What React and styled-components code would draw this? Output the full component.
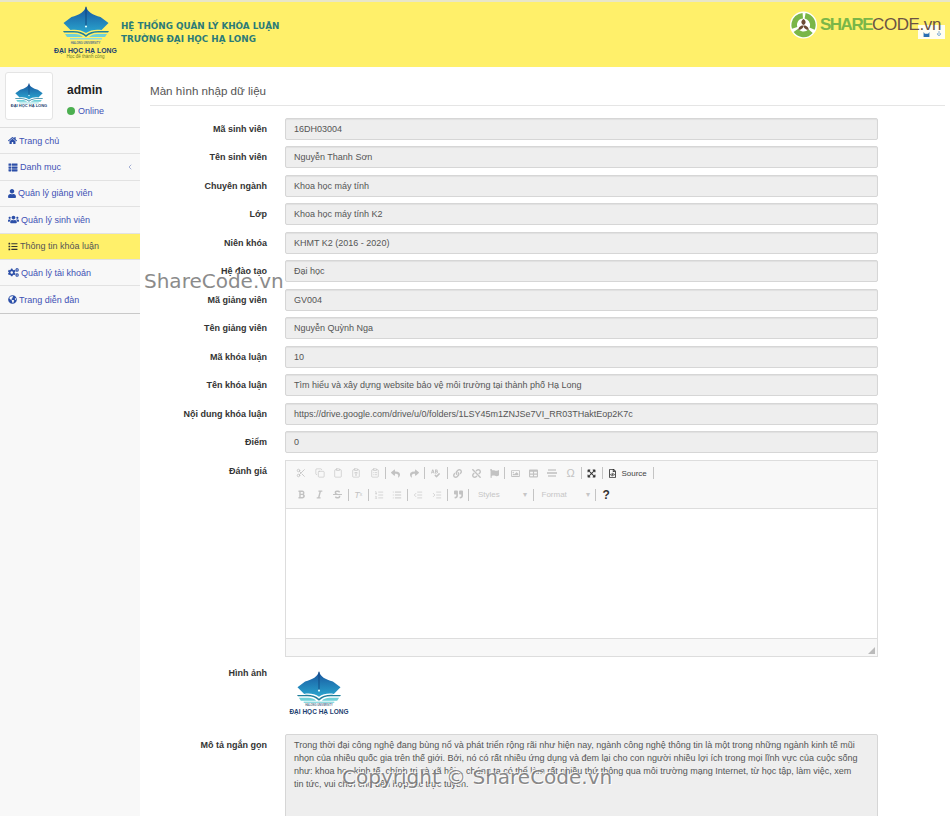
import styled, { createGlobalStyle } from "styled-components";
import {
  FaHome, FaThList, FaUser, FaUsers, FaList, FaCogs, FaGlobeAmericas, FaReply, FaShare,
  FaLink, FaUnlink, FaFlag, FaRegImage, FaTable, FaExpandArrowsAlt, FaRegFileCode, FaQuoteRight,
  FaSpellCheck, FaBold, FaItalic, FaStrikethrough,
} from "react-icons/fa";
import { ChevronLeft, Scissors, Copy, Clipboard, ClipboardType, ClipboardList, List, ListOrdered, IndentDecrease, IndentIncrease } from "lucide-react";

const GlobalStyle = createGlobalStyle`
  html, body { margin: 0; padding: 0; height: 816px; overflow: hidden; background: #fff; }
  body { font-family: "Liberation Sans", Arial, sans-serif; }
`;

const Page = styled.div`
  position: relative;
  width: 950px;
  height: 816px;
  overflow: hidden;
`;

const Header = styled.header`
  height: 65px;
  box-sizing: content-box;
  border-top: 2px solid #e8e6c8;
  background: #fff06a;
  display: flex;
  justify-content: space-between;
  padding-right: 5px;
`;

const Brand = styled.div`
  display: flex;
  align-items: flex-start;
  padding-left: 54px;
`;

const BrandLogo = styled.div`
  width: 63px;
  display: flex;
  flex-direction: column;
  align-items: center;
  padding-top: 4px;
`;

const LogoTiny = styled.div`
  font-size: ${(p) => p.$size}px;
  font-weight: bold;
  color: #55708a;
  line-height: ${(p) => p.$line}px;
  white-space: nowrap;
`;

const LogoName = styled.div`
  font-size: ${(p) => p.$size}px;
  font-weight: bold;
  color: #1d3f70;
  white-space: nowrap;
  line-height: 1.1;
`;

const LogoSlogan = styled.div`
  font-size: 4.5px;
  color: #6a7a2a;
  line-height: 1;
`;

const BrandTitle = styled.div`
  margin: 18px 0 0 4px;
  font-family: "DejaVu Sans", sans-serif;
  font-size: 8.8px;
  font-weight: bold;
  line-height: 13px;
  color: #2b7b78;
`;

const ShareLogo = styled.div`
  position: relative;
  display: flex;
  align-items: center;
  height: 28px;
  margin-top: 9px;
  padding-right: 4px;
`;

const ShareText = styled.span`
  position: relative;
  z-index: 1;
  font-size: 17px;
  letter-spacing: ${(p) => (p.$bold ? -1.5 : -0.4)}px;
  font-weight: ${(p) => (p.$bold ? "bold" : "normal")};
  color: ${(p) => p.$color};
  margin-left: ${(p) => p.$left || 0}px;
`;

const Patch = styled.div`
  position: absolute;
  right: 0;
  top: 14px;
  width: 27px;
  height: 14px;
  background: #fffef2;
  display: flex;
  align-items: flex-end;
  padding: 0 0 2px 5px;
  gap: 6px;
  box-sizing: border-box;
`;

const Body = styled.div`
  display: flex;
  height: 749px;
`;

const Sidebar = styled.aside`
  width: 140px;
  flex: none;
  background: #f8f8f8;
`;

const Profile = styled.div`
  height: 61px;
  box-sizing: border-box;
  padding: 5px;
  display: flex;
  gap: 14px;
  border-bottom: 1px solid #ddd;
`;

const Avatar = styled.div`
  width: 48px;
  height: 48px;
  box-sizing: border-box;
  background: #fff;
  border: 1px solid #e4e4e4;
  border-radius: 3px;
  display: flex;
  flex-direction: column;
  align-items: center;
  justify-content: center;
`;

const ProfileInfo = styled.div`
  padding-top: 11px;
`;

const UserName = styled.div`
  font-size: 12px;
  font-weight: bold;
  color: #222;
  line-height: 14px;
`;

const Status = styled.div`
  display: flex;
  align-items: center;
  gap: 3px;
  margin-top: 8px;
  font-size: 9px;
  line-height: 12px;
  color: #3f51b5;
`;

const Dot = styled.span`
  width: 8px;
  height: 8px;
  border-radius: 50%;
  background: #4caf50;
`;

const Nav = styled.nav`
  border-bottom: 1px solid #c9c9c9;
`;

const NavItem = styled.div`
  height: 26.4px;
  box-sizing: border-box;
  padding: 0 8px;
  display: flex;
  align-items: center;
  gap: 2px;
  font-size: 9px;
  color: ${(p) => (p.$active ? "#555" : "#3f51b5")};
  background: ${(p) => (p.$active ? "#fff06a" : "transparent")};
  border-bottom: 1px solid #e2e2e2;
  &:last-child { border-bottom: 0; }
  > svg {
    flex: none;
    width: ${(p) => p.$iconW}px;
    height: 9px;
    color: ${(p) => (p.$active ? "#333" : "#2c4fa8")};
  }
`;

const Chevron = styled.span`
  margin-left: auto;
  display: flex;
  margin-right: -2px;
  color: #5a6fb5;
`;

const Main = styled.main`
  flex: 1;
  padding: 17px 5px 0 10px;
  min-width: 0;
`;

const Title = styled.h1`
  margin: 0 0 4px;
  padding-bottom: 7px;
  border-bottom: 1px solid #e5e5e5;
  font-size: 11.6px;
  line-height: 14px;
  font-weight: normal;
  color: #555;
`;

const Form = styled.div`
  width: 728px;
  margin-top: 11.5px;
`;

const Row = styled.div`
  display: grid;
  grid-template-columns: 117px 593px;
  column-gap: 18px;
  align-items: start;
  margin-bottom: ${(p) => p.$gap ?? 6.5}px;
`;

const Label = styled.label`
  text-align: right;
  font-size: 9px;
  font-weight: bold;
  color: #333;
  line-height: 12px;
  padding-top: ${(p) => p.$top ?? 5}px;
`;

const Input = styled.div`
  height: 22px;
  box-sizing: border-box;
  padding: 0 8px;
  background: #eee;
  border: 1px solid #d6d6d6;
  border-radius: 2px;
  font-size: 9px;
  color: #555;
  display: flex;
  align-items: center;
  box-shadow: inset 0 1px 1px rgba(0, 0, 0, 0.06);
`;

const TextArea = styled.div`
  height: 110px;
  box-sizing: border-box;
  padding: 4px 15px 4px 8px;
  background: #eee;
  border: 1px solid #d6d6d6;
  border-radius: 2px;
  font-size: 9px;
  line-height: 13.3px;
  color: #555;
`;

const Editor = styled.div`
  border: 1px solid #ddd;
  height: 197px;
  box-sizing: border-box;
  display: flex;
  flex-direction: column;
`;

const Toolbar = styled.div`
  height: 48px;
  flex: none;
  box-sizing: border-box;
  background: #f8f8f8;
  border-bottom: 1px solid #ddd;
  padding: 2px 6px;
`;

const ToolRow = styled.div`
  height: 21.5px;
  display: flex;
  align-items: center;
`;

const Tool = styled.span`
  width: ${(p) => p.$w || 18.4}px;
  height: 14px;
  flex: none;
  display: flex;
  align-items: center;
  justify-content: center;
  font-size: ${(p) => p.$size || 9}px;
  font-weight: ${(p) => (p.$bold ? "bold" : "normal")};
  color: ${(p) => (p.$dark ? "#333" : "#c2c2c2")};
  sub { font-size: 5px; line-height: 1; vertical-align: -2px; }
`;

const Sep = styled.span`
  width: 1px;
  height: 12px;
  flex: none;
  margin: 0 ${(p) => p.$m ?? 0.8}px;
  background: #c4c4c4;
`;

const SourceText = styled.span`
  font-size: 8px;
  color: #444;
  margin: 0 5px 0 0;
`;

const Combo = styled.span`
  width: ${(p) => p.$w}px;
  flex: none;
  display: flex;
  justify-content: space-between;
  font-size: 8px;
  color: #c6c6c6;
  padding: 0 5px 0 ${(p) => p.$left}px;
  box-sizing: border-box;
`;

const EditArea = styled.div`
  flex: 1;
  background: #fff;
`;

const EditorFoot = styled.div`
  height: 17px;
  flex: none;
  background: #f8f8f8;
  border-top: 1px solid #ddd;
  position: relative;
`;

const Grip = styled.span`
  position: absolute;
  right: 2px;
  bottom: 2px;
  width: 0;
  height: 0;
  border-left: 7px solid transparent;
  border-bottom: 7px solid #bbb;
`;

const ImageCell = styled.div`
  width: 60px;
  margin-left: 4px;
  padding-top: 6px;
  display: flex;
  flex-direction: column;
  align-items: center;
  height: 60px;
`;

const Watermark = styled.div`
  position: absolute;
  left: ${(p) => p.$x}px;
  top: ${(p) => p.$y}px;
  font-family: "DejaVu Sans", sans-serif;
  font-size: 20px;
  line-height: 22px;
  white-space: nowrap;
  color: #777;
  text-shadow: 0 0 2px #fff, 1px 1px 0 #fff, -1px -1px 0 #fff;
  opacity: 0.85;
`;

function Ship({ width, id }) {
  return (
    <svg width={width} viewBox="0 0 46 34" aria-hidden="true">
      <defs>
        <linearGradient id={id} x1="0" y1="0" x2="0" y2="1">
          <stop offset="0" stopColor="#17529c" />
          <stop offset="1" stopColor="#2aa6cf" />
        </linearGradient>
      </defs>
      <path d="M23 0 C24 6 30 9 37.5 11 L45.5 17 L38.5 24 C33 23 27 24 23 27 C19 24 13 23 7.5 24 L0.5 17 L8.5 11 C16 9 22 6 23 0 Z" fill={`url(#${id})`} />
      <path d="M23 1 V20" stroke="#0e3c74" strokeWidth="0.8" />
      <circle cx="23" cy="20.5" r="1.1" fill="#dff" />
      <path d="M0 25 H8 C14 24.5 20 26 23 29 C26 26 32 24.5 38 25 H46 L45 26.5 H37 C31 26 27 27.5 23 31 C19 27.5 15 26 9 26.5 H1 Z" fill="#1f7f9c" />
      <path d="M2 28 H12 C15 28 18 29 20 31 H4 Z M44 28 H34 C31 28 28 29 26 31 H42 Z" fill="#6fd0d8" />
      <path d="M7 32 H39 V33.5 H7 Z" fill="#8fdbe0" />
    </svg>
  );
}

function ShareMark() {
  return (
    <svg width="29" height="28" viewBox="0 0 30 30" aria-hidden="true">
      <circle cx="15" cy="15" r="14.5" fill="#fff" />
      <circle cx="15" cy="15" r="10" fill="none" stroke="#7ab648" strokeWidth="6" strokeDasharray="18 2.94" transform="rotate(-80 15 15)" />
      <path d="M15 8.5 C18 10.5 18 13.5 15 15 C12 13.5 12 10.5 15 8.5 Z" fill="#6b4a35" />
      <path d="M9.5 20 C9.5 17 12.5 15 15 15.5 C15 18.5 12 20.5 9.5 20 Z" fill="#6b4a35" />
      <path d="M20.5 20 C20.5 17 17.5 15 15 15.5 C15 18.5 18 20.5 20.5 20 Z" fill="#6b4a35" />
    </svg>
  );
}

function PatchBits() {
  return (
    <>
      <svg width="7" height="5" viewBox="0 0 7 6" aria-hidden="true"><path d="M0 0 L1.5 2 H5.5 L7 0 V6 H0 Z" fill="#2a6fb0" /></svg>
      <svg width="6" height="6" viewBox="0 0 6 8" aria-hidden="true"><path d="M3 0 V5 M1 3 C0 7 6 7 5 3" stroke="#5a94c8" strokeWidth="1" fill="none" /></svg>
    </>
  );
}

function RuleIcon() {
  return (
    <svg width="10" height="10" viewBox="0 0 10 10" aria-hidden="true">
      <path d="M1 1 H9 V3 H1 Z M1 7 H9 V9 H1 Z" fill="#d6d6d6" />
      <path d="M0 5 H10" stroke="#bbb" strokeWidth="1.4" />
    </svg>
  );
}

const fields = [
  ["Mã sinh viên", "16DH03004"],
  ["Tên sinh viên", "Nguyễn Thanh Sơn"],
  ["Chuyên ngành", "Khoa học máy tính"],
  ["Lớp", "Khoa học máy tính K2"],
  ["Niên khóa", "KHMT K2 (2016 - 2020)"],
  ["Hệ đào tạo", "Đại học"],
  ["Mã giảng viên", "GV004"],
  ["Tên giảng viên", "Nguyễn Quỳnh Nga"],
  ["Mã khóa luận", "10"],
  ["Tên khóa luận", "Tìm hiểu và xây dựng website bảo vệ môi trường tại thành phố Hạ Long"],
  ["Nội dung khóa luận", "https://drive.google.com/drive/u/0/folders/1LSY45m1ZNJSe7VI_RR03THaktEop2K7c"],
  ["Điểm", "0"],
];

const menu = [
  [FaHome, "Trang chủ", 9],
  [FaThList, "Danh mục", 10, true],
  [FaUser, "Quản lý giảng viên", 8],
  [FaUsers, "Quản lý sinh viên", 11],
  [FaList, "Thông tin khóa luận", 10],
  [FaCogs, "Quản lý tài khoản", 11],
  [FaGlobeAmericas, "Trang diễn đàn", 9],
];

const App = () => {
  return (
    <Page>
      <GlobalStyle />
      <Header>
        <Brand>
          <BrandLogo>
            <Ship width={46} id="shipHead" />
            <LogoTiny $size={2.8} $line={7}>HALONG UNIVERSITY</LogoTiny>
            <LogoName $size={6.9}>ĐẠI HỌC HẠ LONG</LogoName>
            <LogoSlogan>Học để thành công</LogoSlogan>
          </BrandLogo>
          <BrandTitle>
            HỆ THỐNG QUẢN LÝ KHÓA LUẬN
            <br />
            TRƯỜNG ĐẠI HỌC HẠ LONG
          </BrandTitle>
        </Brand>
        <ShareLogo>
          <Patch><PatchBits /></Patch>
          <ShareMark />
          <ShareText $bold $color="#7ab648" $left={2}>SHARE</ShareText>
          <ShareText $color="#6b5344">CODE.vn</ShareText>
        </ShareLogo>
      </Header>
      <Body>
        <Sidebar>
          <Profile>
            <Avatar>
              <Ship width={28} id="shipAvatar" />
              <LogoName $size={4}>ĐẠI HỌC HẠ LONG</LogoName>
            </Avatar>
            <ProfileInfo>
              <UserName>admin</UserName>
              <Status><Dot />Online</Status>
            </ProfileInfo>
          </Profile>
          <Nav>
            {menu.map(([Icon, text, iconW, arrow], i) => (
              <NavItem key={text} $active={i === 4} $iconW={iconW}>
                <Icon />
                {text}
                {arrow && <Chevron><ChevronLeft size={8} strokeWidth={1.6} /></Chevron>}
              </NavItem>
            ))}
          </Nav>
        </Sidebar>
        <Main>
          <Title>Màn hình nhập dữ liệu</Title>
          <Form>
            {fields.map(([label, value]) => (
              <Row key={label}>
                <Label>{label}</Label>
                <Input>{value}</Input>
              </Row>
            ))}
            <Row $gap={8}>
              <Label>Đánh giá</Label>
              <Editor>
                <Toolbar>
                  <ToolRow>
                    <Tool><Scissors size={10} /></Tool><Tool><Copy size={10} strokeWidth={1.5} /></Tool><Tool><Clipboard size={10} strokeWidth={1.5} /></Tool><Tool><ClipboardType size={10} strokeWidth={1.5} /></Tool><Tool><ClipboardList size={10} strokeWidth={1.5} /></Tool>
                    <Sep />
                    <Tool><FaReply /></Tool><Tool><FaShare /></Tool>
                    <Sep />
                    <Tool $w={20}><FaSpellCheck /></Tool>
                    <Sep />
                    <Tool><FaLink /></Tool><Tool><FaUnlink /></Tool><Tool><FaFlag /></Tool>
                    <Sep />
                    <Tool><FaRegImage /></Tool><Tool><FaTable /></Tool><Tool><RuleIcon /></Tool><Tool $size={11}>Ω</Tool>
                    <Sep />
                    <Tool $dark><FaExpandArrowsAlt /></Tool>
                    <Sep />
                    <Tool $dark $w={18}><FaRegFileCode /></Tool>
                    <SourceText>Source</SourceText>
                    <Sep />
                  </ToolRow>
                  <ToolRow>
                    <Tool><FaBold /></Tool><Tool><FaItalic /></Tool><Tool><FaStrikethrough /></Tool>
                    <Sep />
                    <Tool $w={17}><i>T</i><sub>x</sub></Tool>
                    <Sep />
                    <Tool><ListOrdered size={10} strokeWidth={1.5} /></Tool><Tool><List size={10} strokeWidth={2} /></Tool>
                    <Sep $m={1} />
                    <Tool><IndentDecrease size={10} strokeWidth={1.5} /></Tool><Tool><IndentIncrease size={10} strokeWidth={1.5} /></Tool>
                    <Sep $m={1} />
                    <Tool><FaQuoteRight /></Tool>
                    <Sep />
                    <Combo $w={62} $left={8}><span>Styles</span><span>▾</span></Combo>
                    <Sep />
                    <Combo $w={60} $left={7}><span>Format</span><span>▾</span></Combo>
                    <Sep />
                    <Tool $dark $bold $size={12}>?</Tool>
                  </ToolRow>
                </Toolbar>
                <EditArea />
                <EditorFoot><Grip /></EditorFoot>
              </Editor>
            </Row>
            <Row $gap={3}>
              <Label $top={2}>Hình ảnh</Label>
              <ImageCell>
                <Ship width={44} id="shipImage" />
                <LogoTiny $size={2.6} $line={5}>HALONG UNIVERSITY</LogoTiny>
                <LogoName $size={6.5}>ĐẠI HỌC HẠ LONG</LogoName>
              </ImageCell>
            </Row>
            <Row>
              <Label>Mô tả ngắn gọn</Label>
              <TextArea>
                Trong thời đại công nghệ đang bùng nổ và phát triển rộng rãi như hiện nay, ngành công nghệ thông tin là một trong những ngành kinh tế mũi nhọn của nhiều quốc gia trên thế giới. Bởi, nó có rất nhiều ứng dụng và đem lại cho con người nhiều lợi ích trong mọi lĩnh vực của cuộc sống như: khoa học kinh tế, chính trị và xã hội... chúng ta có thể làm rất nhiều thứ thông qua môi trường mạng Internet, từ học tập, làm việc, xem tin tức, vui chơi cho đến hợp tác trực tuyến.
              </TextArea>
            </Row>
          </Form>
        </Main>
      </Body>
      <Watermark $x={144} $y={270}>ShareCode.vn</Watermark>
      <Watermark $x={342} $y={766}>Copyright © ShareCode.vn</Watermark>
    </Page>
  );
};

export default App;
